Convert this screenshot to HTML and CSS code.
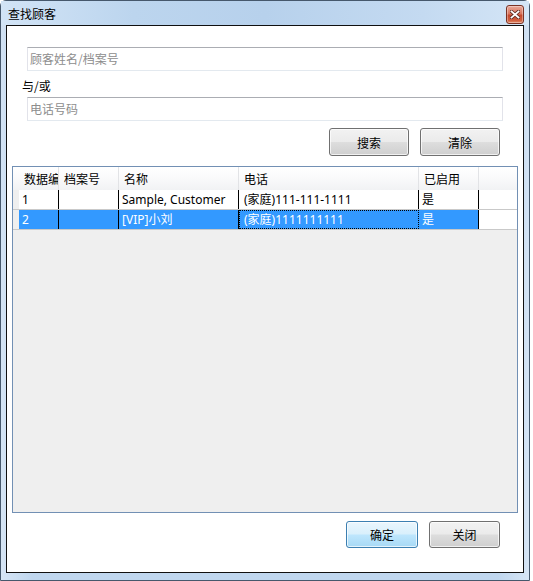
FILE: index.html
```html
<!DOCTYPE html>
<html lang="zh">
<head>
<meta charset="utf-8">
<title>查找顾客</title>
<link rel="stylesheet" href="styles.css">
</head>
<body>
<div class="window">
  <div class="titlebar">
    <span class="title">查找顾客</span>
    <div class="close" aria-label="关闭">
      <svg width="10" height="9" viewBox="0 0 10 9">
        <path d="M1.5 1.5 L8.5 7.5 M8.5 1.5 L1.5 7.5" stroke="#5a2a20" stroke-width="3.4" stroke-linecap="square" fill="none"/>
        <path d="M1.5 1.5 L8.5 7.5 M8.5 1.5 L1.5 7.5" stroke="#ffffff" stroke-width="1.8" stroke-linecap="square" fill="none"/>
      </svg>
    </div>
  </div>
  <div class="client">
    <div class="search">
      <div class="textbox"><span class="ph">顾客姓名/档案号</span></div>
      <div class="label">与/或</div>
      <div class="textbox"><span class="ph">电话号码</span></div>
      <div class="actions">
        <div class="btn btn-wide">搜索</div>
        <div class="btn btn-wide">清除</div>
      </div>
    </div>
    <div class="grid">
      <div class="row head">
        <div class="lead"></div>
        <div class="cell">数据编</div>
        <div class="cell">档案号</div>
        <div class="cell">名称</div>
        <div class="cell">电话</div>
        <div class="cell">已启用</div>
        <div class="fill"></div>
      </div>
      <div class="row">
        <div class="lead"></div>
        <div class="cell">1</div>
        <div class="cell"></div>
        <div class="cell">Sample, Customer</div>
        <div class="cell phone">(家庭)111-111-1111</div>
        <div class="cell">是</div>
        <div class="fill"></div>
      </div>
      <div class="row selected">
        <div class="lead"></div>
        <div class="cell">2</div>
        <div class="cell"></div>
        <div class="cell">[VIP]小刘</div>
        <div class="cell phone focus">(家庭)1111111111</div>
        <div class="cell">是</div>
        <div class="fill"></div>
      </div>
    </div>
    <div class="footer">
      <div class="btn btn-default btn-ok">确定</div>
      <div class="btn btn-close">关闭</div>
    </div>
  </div>
</div>
</body>
</html>
```
FILE: styles.css
```css
* { box-sizing: border-box; }

body {
  margin: 0;
  background: #ffffff;
  font-family: "Noto Sans", "Noto Sans CJK SC", sans-serif;
  font-size: 12px;
  color: #000;
}

.window {
  width: 530px;
  height: 581px;
  border: 1px solid #46586c;
  border-radius: 6px 6px 0 0;
  padding: 0 5px 7px 5px;
  background:
    linear-gradient(90deg, rgba(255,255,255,0.35) 0%, rgba(255,255,255,0) 6%, rgba(255,255,255,0) 94%, rgba(255,255,255,0.35) 100%),
    linear-gradient(180deg, #c9ddf2 0px, #bcd4ee 14px, #b9d2ed 25px, #c0d7ef 100%);
  display: flex;
  flex-direction: column;
}

.titlebar {
  height: 24px;
  display: flex;
  align-items: flex-start;
  justify-content: space-between;
  background: linear-gradient(90deg, #d2e4f6 0%, #bcd5ee 25%, #b7d1ec 50%, #c4daf1 80%, #d4e5f6 100%);
  margin: 0 -5px;
  padding: 0 5px 0 7px;
}

.title {
  font-family: "Noto Sans CJK SC", sans-serif;
  font-size: 12px;
  line-height: 16px;
  margin-top: 5px;
  color: #000;
}

.close {
  width: 18px;
  height: 19px;
  margin-top: 4px;
  border: 1px solid #7a3224;
  border-radius: 3px;
  background: linear-gradient(180deg, #e9a898 0%, #d9765e 45%, #c5482d 55%, #d0603f 85%, #e38e6e 100%);
  box-shadow: inset 0 0 0 1px rgba(255,255,255,0.35);
  display: flex;
  align-items: center;
  justify-content: center;
}

.client {
  flex: 1;
  border: 1px solid #101010;
  background: #ffffff;
  display: flex;
  flex-direction: column;
}

.search {
  padding: 21px 20px 0 20px;
  display: flex;
  flex-direction: column;
}

.textbox {
  height: 24px;
  border: 1px solid;
  border-color: #abadb3 #e2e3ea #e3e9ef #e2e3ea;
  display: flex;
  align-items: center;
  padding-left: 2px;
}

.ph {
  font-family: "Noto Sans CJK SC", sans-serif;
  color: #8d8d8d;
  line-height: 16px;
}

.label {
  font-family: "Noto Sans CJK SC", sans-serif;
  margin: 7px 0 3px -5px;
  line-height: 16px;
}

.actions {
  display: flex;
  justify-content: flex-end;
  gap: 11px;
  margin-top: 7px;
  padding-right: 3px;
}

.btn {
  height: 28px;
  border: 1px solid #707070;
  border-radius: 3px;
  background: linear-gradient(180deg, #f2f2f2 0%, #ebebeb 48%, #dddddd 52%, #cfcfcf 100%);
  box-shadow: inset 0 0 0 1px rgba(255,255,255,0.7);
  display: flex;
  align-items: center;
  justify-content: center;
  font-family: "Noto Sans CJK SC", sans-serif;
  font-size: 12px;
  color: #000;
}

.btn-wide { width: 80px; }

.btn-default {
  border-color: #3c7fb1;
  background: linear-gradient(180deg, #eaf6fd 0%, #d9f0fc 48%, #bee6fd 52%, #a7d9f5 100%);
}

.grid {
  margin: 10px 5px 0 5px;
  height: 347px;
  border: 1px solid #7290b4;
  background: #efefef;
}

.row {
  display: grid;
  grid-template-columns: 6px 40px 60px 120px 180px 60px 1fr;
  height: 20px;
  border-bottom: 1px solid #c9c9c9;
}

.row .cell {
  border-right: 1px solid #000;
  background: #ffffff;
  padding-left: 3px;
  line-height: 19px;
  white-space: nowrap;
  overflow: hidden;
}

.row .cell.phone { padding-left: 5px; }

.row .fill { background: #ffffff; }
.row .lead { background: #efefef; }

.row.head {
  height: 23px;
  border-bottom: none;
  background: linear-gradient(180deg, #ffffff 0%, #fbfbfc 40%, #f1f2f4 100%);
}

.row.head .cell {
  background: transparent;
  border-right: 1px solid #e2e3e6;
  padding-left: 5px;
  line-height: 23px;
  font-family: "Noto Sans CJK SC", sans-serif;
  text-overflow: clip;
}

.row.head .lead, .row.head .fill { background: transparent; }

.row.selected .cell {
  background: #3399ff;
  color: #ffffff;
}

.row.selected .cell.focus {
  border: 1px dotted #000;
  line-height: 17px;
  padding-left: 4px;
}

.footer {
  display: flex;
  justify-content: flex-end;
  gap: 11px;
  margin-top: 8px;
  padding-right: 23px;
}

.footer .btn { height: 27px; }
.btn-ok { width: 72px; }
.btn-close { width: 71px; }
```
